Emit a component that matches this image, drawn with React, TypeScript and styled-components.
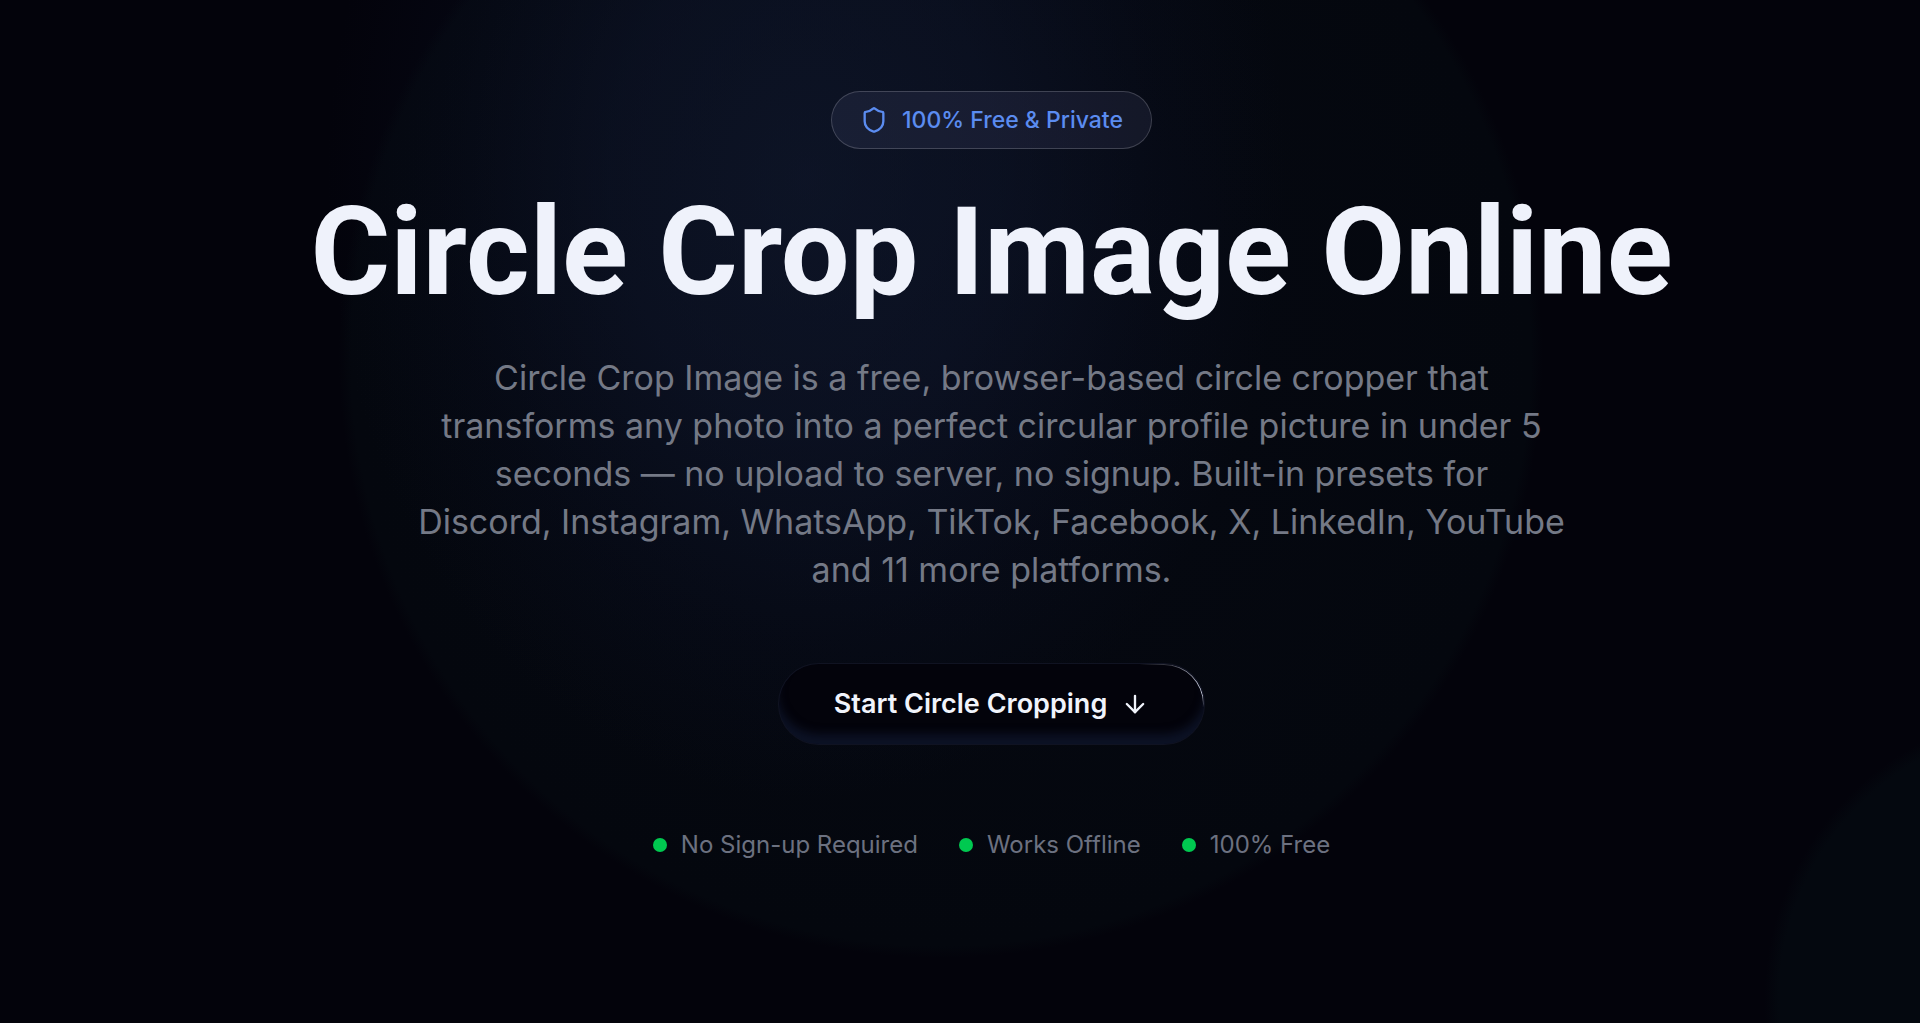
import React from "react";
import styled, { createGlobalStyle } from "styled-components";
import { ArrowDown, Shield } from "lucide-react";

const GlobalStyle = createGlobalStyle`
  *, *::before, *::after { box-sizing: border-box; }
  body { margin: 0; background: #03030b; }
`;

const Hero = styled.main`
  display: flex;
  flex-direction: column;
  align-items: center;
  min-height: 100vh;
  padding: 91px 24px 64px 87px;
  overflow: hidden;
  color: #eff2fb;
  font-family: Inter, "Liberation Sans", sans-serif;
  text-align: center;
  background:
    radial-gradient(ellipse 480px 620px at 42% 180px, rgba(22, 33, 62, 0.46) 0%, rgba(20, 30, 60, 0.36) 40%, rgba(16, 24, 56, 0.14) 74%, transparent 100%),
    radial-gradient(circle 602px at 49% 356px, #060912 0%, #04070e 98%, transparent 100%),
    radial-gradient(circle 290px at 107% 1000px, #04080f 0%, #04080f 95%, transparent 100%),
    #03030b;
`;

const Badge = styled.div`
  display: flex;
  align-items: center;
  gap: 14px;
  padding: 11px 28px;
  border: 1px solid rgba(255, 255, 255, 0.18);
  border-radius: 29px;
  background: rgba(150, 160, 220, 0.09);
  color: #5b8cf0;
  font-size: 23px;
  font-weight: 500;
  line-height: 34px;
`;

const Title = styled.h1`
  margin: 42px 0 0;
  font-family: Roboto, Inter, sans-serif;
  font-size: 122px;
  font-weight: 700;
  line-height: 124px;
`;

const Lead = styled.p`
  max-width: 1152px;
  margin: 39px 0 0;
  color: #747986;
  font-size: 34px;
  font-weight: 400;
  line-height: 48px;
`;

const StartButton = styled.button`
  position: relative;
  display: flex;
  align-items: center;
  gap: 14px;
  margin: 69px 0 0;
  padding: 16px 55px;
  border: 1px solid rgba(110, 130, 190, 0.13);
  border-radius: 41px;
  background: #03030b;
  box-shadow: inset 0 -12px 10px -2px #0c1225;
  color: #f1f4fc;
  font-family: inherit;
  font-size: 27px;
  font-weight: 600;
  line-height: 48px;
  cursor: pointer;

  /* light streak running along the rim */
  &::before {
    content: "";
    position: absolute;
    inset: 0;
    padding: 1px;
    border-radius: inherit;
    background: conic-gradient(
      transparent 75deg,
      rgba(226, 232, 250, 0.5) 80deg,
      rgba(226, 232, 250, 0.9) 87deg,
      transparent 91deg
    );
    mask: linear-gradient(#000 0 0) content-box exclude, linear-gradient(#000 0 0);
    pointer-events: none;
  }
`;

const Perks = styled.ul`
  display: flex;
  flex-wrap: wrap;
  justify-content: center;
  gap: 14px 41px;
  margin: 83px 0 0;
  padding: 0;
  list-style: none;
`;

const Perk = styled.li`
  display: flex;
  align-items: center;
  gap: 14px;
  color: #6c7180;
  font-size: 24px;
  line-height: 34px;

  &::before {
    content: "";
    width: 14px;
    height: 14px;
    border-radius: 50%;
    background: #00c950;
  }
`;

const perks = ["No Sign-up Required", "Works Offline", "100% Free"];

export default function App() {
  return (
    <>
      <GlobalStyle />
      <Hero>
        <Badge>
          <Shield size={28} aria-hidden="true" />
          <span>100% Free &amp; Private</span>
        </Badge>
        <Title>Circle Crop Image Online</Title>
        <Lead>
          Circle Crop Image is a free, browser-based circle cropper that transforms any photo into a
          perfect circular profile picture in under 5 seconds — no upload to server, no signup.
          Built-in presets for
          <br />
          Discord, Instagram, WhatsApp, TikTok, Facebook, X, LinkedIn, YouTube and 11 more platforms.
        </Lead>
        <StartButton type="button">
          <span>Start Circle Cropping</span>
          <ArrowDown size={28} aria-hidden="true" />
        </StartButton>
        <Perks>
          {perks.map((perk) => (
            <Perk key={perk}>{perk}</Perk>
          ))}
        </Perks>
      </Hero>
    </>
  );
}
